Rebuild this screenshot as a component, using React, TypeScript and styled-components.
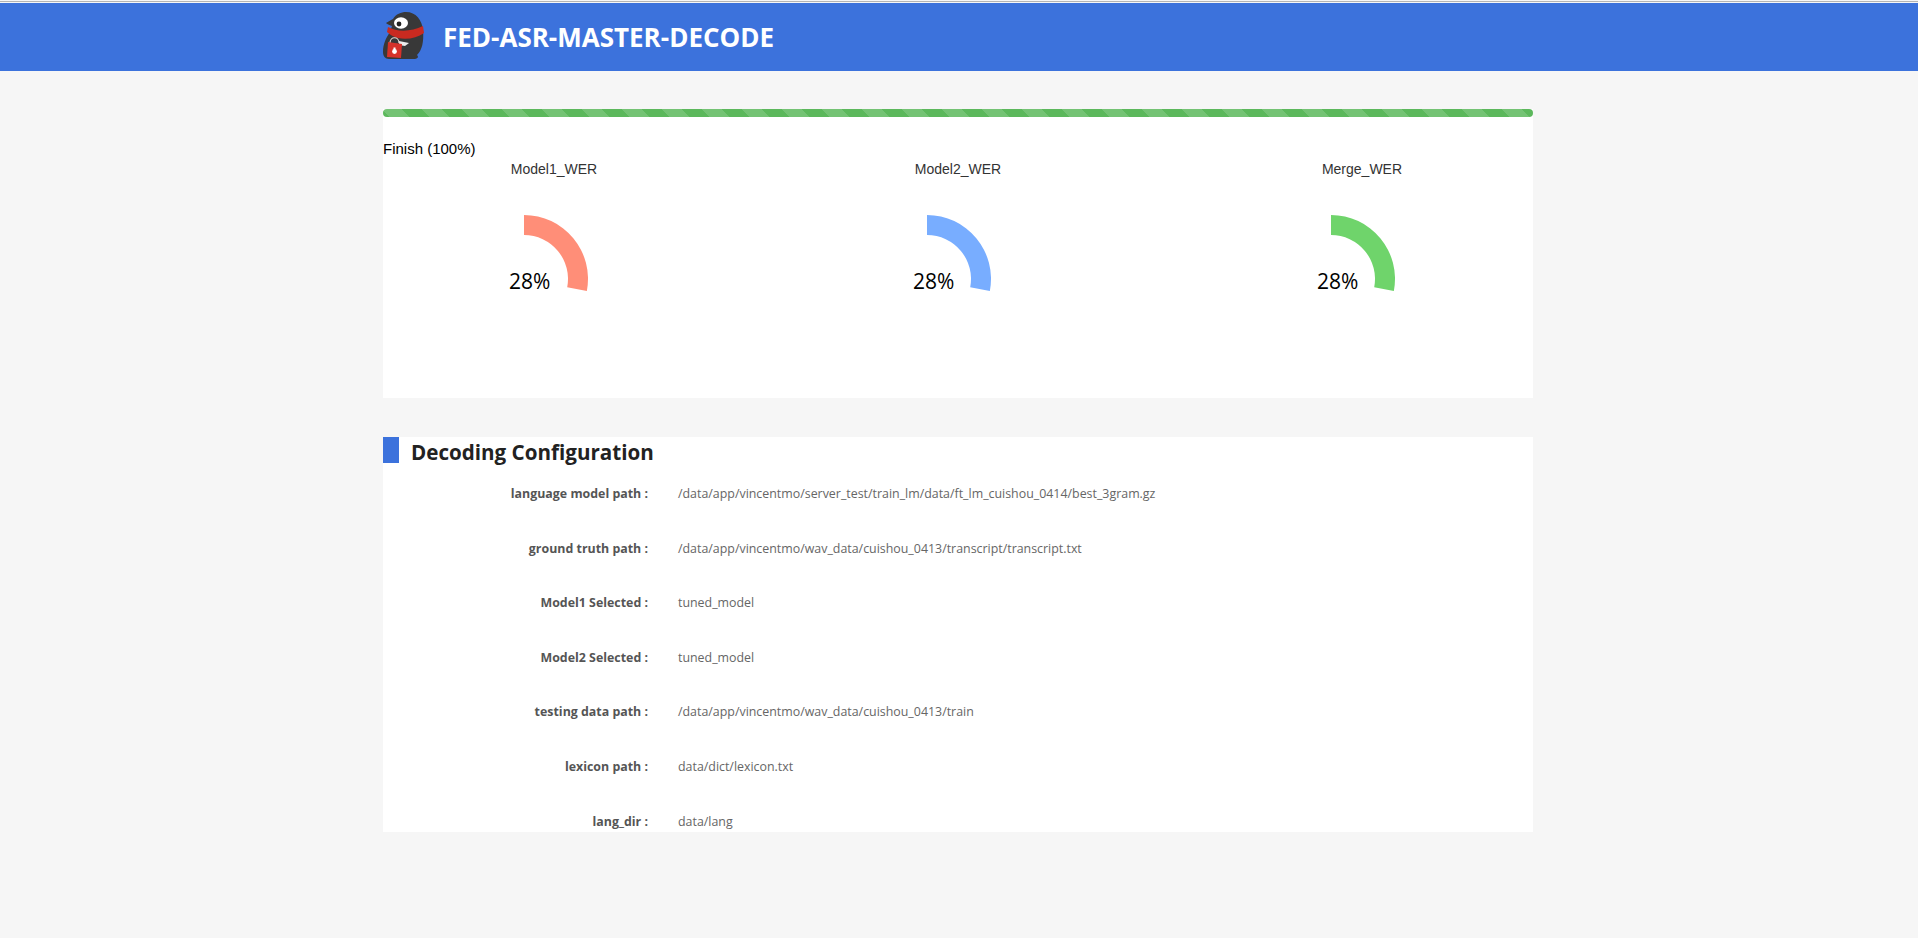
import React from "react";
import styled, { createGlobalStyle } from "styled-components";

const Global = createGlobalStyle`
  html, body { margin: 0; padding: 0; background: #f6f6f6; }
  body { font-family: "Open Sans", "Noto Sans", sans-serif; }
`;

const Page = styled.div`
  min-height: 938px;
  display: flex;
  flex-direction: column;
  align-items: center;
  background: #f6f6f6;
  box-sizing: border-box;
`;

const TopRule = styled.div`
  width: 100%;
  height: 1px;
  flex: none;
  margin: 1px 0;
  background: #b4b4b4;
`;

const Header = styled.header`
  width: 100%;
  height: 68px;
  flex: none;
  background: #3c72dc;
  display: flex;
  justify-content: center;
`;

const HeaderInner = styled.div`
  width: 1150px;
  margin-right: 2px;
  display: flex;
  align-items: center;
  gap: 18px;
`;

const Brand = styled.h1`
  margin: 0;
  color: #fff;
  font-size: 26px;
  font-weight: 700;
  line-height: 68px;
`;

const Main = styled.main`
  width: 1150px;
  margin-right: 2px;
  padding-top: 38px;
  display: flex;
  flex-direction: column;
  gap: 39px;
`;

const ProgressPanel = styled.section`
  background: #fff;
  height: 289px;
`;

const ProgressTrack = styled.div`
  height: 8px;
  border-radius: 4px;
  margin-bottom: 24px;
  background-color: #5cb85c;
  background-image: linear-gradient(
    45deg,
    transparent 25%,
    rgba(255, 255, 255, 0.15) 25%,
    rgba(255, 255, 255, 0.15) 50%,
    transparent 50%,
    transparent 75%,
    rgba(255, 255, 255, 0.15) 75%
  );
  background-size: 40px 40px;
  background-position: 19px 0;
`;

const Status = styled.div`
  font-family: "Liberation Sans", Arial, sans-serif;
  font-size: 15px;
  line-height: 16px;
  color: #000;
`;

const Charts = styled.div`
  display: flex;
  justify-content: space-between;
`;

const Chart = styled.div`
  position: relative;
  width: 342px;
  display: flex;
  flex-direction: column;
  align-items: center;
`;

const ChartTitle = styled.div`
  font-family: "Liberation Sans", Arial, sans-serif;
  font-size: 14px;
  line-height: 16px;
  margin-top: 4px;
  color: #333;
`;

const GaugeSvg = styled.svg<{ $shift: number }>`
  display: block;
  margin-top: 32px;
  margin-left: ${(p) => p.$shift}px;
`;

const GaugeValue = styled.div`
  position: absolute;
  left: 126px;
  top: 112px;
  font-family: "Open Sans", sans-serif;
  font-size: 21px;
  line-height: 24px;
  color: #000;
`;

const ConfigPanel = styled.section`
  background: #fff;
  height: 395px;
  overflow: hidden;
`;

const SectionHead = styled.div`
  display: flex;
  align-items: flex-start;
  gap: 12px;
  height: 26px;
`;

const SectionMark = styled.span`
  width: 16px;
  height: 26px;
  background: #3c72dc;
`;

const SectionTitle = styled.h2`
  margin: 0;
  font-size: 20.6px;
  font-weight: 700;
  line-height: 31px;
  color: #222;
`;

const Rows = styled.div`
  display: flex;
  flex-direction: column;
  padding-top: 21px;
`;

const Row = styled.div`
  display: grid;
  grid-template-columns: 265px 1fr;
  column-gap: 30px;
  height: 54.6px;
  font-size: 12.4px;
  line-height: 20px;
`;

const Label = styled.div`
  text-align: right;
  font-weight: 700;
  color: #555;
`;

const Value = styled.div`
  color: #666;
`;

const charts = [
  { title: "Model1_WER", color: "#ff8e78", shift: -60 },
  { title: "Model2_WER", color: "#78adff", shift: -62.6 },
  { title: "Merge_WER", color: "#6fd46b", shift: -62 },
];

const rows = [
  ["language model path :", "/data/app/vincentmo/server_test/train_lm/data/ft_lm_cuishou_0414/best_3gram.gz"],
  ["ground truth path :", "/data/app/vincentmo/wav_data/cuishou_0413/transcript/transcript.txt"],
  ["Model1 Selected :", "tuned_model"],
  ["Model2 Selected :", "tuned_model"],
  ["testing data path :", "/data/app/vincentmo/wav_data/cuishou_0413/train"],
  ["lexicon path :", "data/dict/lexicon.txt"],
  ["lang_dir :", "data/lang"],
];

function arcPath(cx: number, cy: number, r0: number, r1: number, pct: number) {
  const a = pct * 2 * Math.PI;
  const sx = cx + r1 * Math.sin(a);
  const sy = cy - r1 * Math.cos(a);
  const ix = cx + r0 * Math.sin(a);
  const iy = cy - r0 * Math.cos(a);
  return `M${cx} ${cy - r1}A${r1} ${r1} 0 0 1 ${sx} ${sy}L${ix} ${iy}A${r0} ${r0} 0 0 0 ${cx} ${cy - r0}Z`;
}

const Penguin = () => (
  <svg width="42" height="50" viewBox="0 0 42 50">
    <path d="M0 40 C0 32 3 26 7 20 L9 14 C6 13 4 12 3 11 C6 9 8 8 10 7 C13 2 18 0 23 0 C33 0 39 8 40 18 C41 30 39 38 34 43 C36 45 35 47 30 47 L6 47 C2 47 0 44 0 40 Z" fill="#383838" />
    <ellipse cx="18" cy="11" rx="7" ry="5.8" fill="#fff" />
    <circle cx="16" cy="12" r="2.4" fill="#222" />
    <path d="M5 15 C14 20 28 20 40 14 L41 21 C34 26 24 28 15 26 C11 25 7 23 4 20 Z" fill="#c92a20" />
    <path d="M16 29 L26 31 L22 34 L16 33 Z" fill="#ececec" />
    <path d="M7 31 C7 24 16 24 16 31" fill="none" stroke="#e8dcd6" strokeWidth="1.2" />
    <path d="M5 30 L19 32 L18 46 L4 45 Z" fill="#d6322a" />
    <circle cx="11.5" cy="39.5" r="2.4" fill="#fff" />
    <rect x="10.5" y="35.5" width="2" height="3" fill="#fff" />
  </svg>
);

export default function App() {
  return (
    <>
      <Global />
      <Page>
        <TopRule />
        <Header>
          <HeaderInner>
            <Penguin />
            <Brand>FED-ASR-MASTER-DECODE</Brand>
          </HeaderInner>
        </Header>
        <Main>
          <ProgressPanel>
            <ProgressTrack />
            <Status>Finish (100%)</Status>
            <Charts>
              {charts.map((c) => (
                <Chart key={c.title}>
                  <ChartTitle>{c.title}</ChartTitle>
                  <GaugeSvg $shift={c.shift} width="140" height="110" viewBox="0 0 140 110">
                    <path d={arcPath(70, 70, 44, 64, 0.28)} fill={c.color} />
                  </GaugeSvg>
                  <GaugeValue>28%</GaugeValue>
                </Chart>
              ))}
            </Charts>
          </ProgressPanel>
          <ConfigPanel>
            <SectionHead>
              <SectionMark />
              <SectionTitle>Decoding Configuration</SectionTitle>
            </SectionHead>
            <Rows>
              {rows.map(([k, v]) => (
                <Row key={k}>
                  <Label>{k}</Label>
                  <Value>{v}</Value>
                </Row>
              ))}
            </Rows>
          </ConfigPanel>
        </Main>
      </Page>
    </>
  );
}
